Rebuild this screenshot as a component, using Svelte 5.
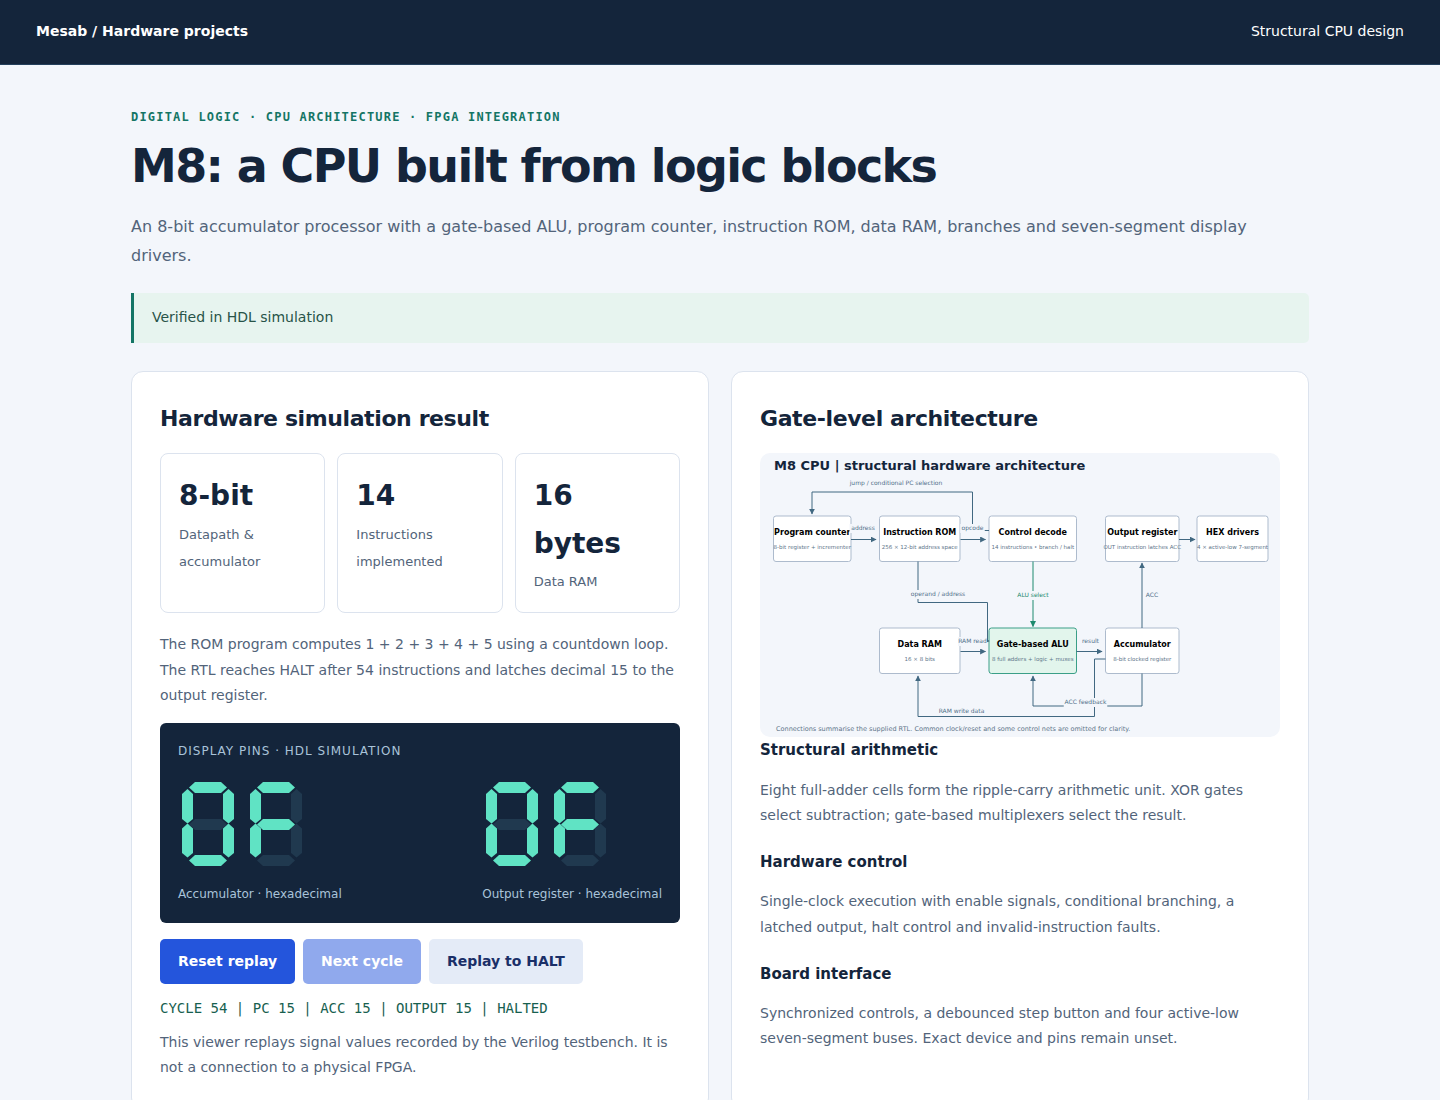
<script>
  const stats = [
    { value: '8-bit', label: 'Datapath & accumulator' },
    { value: '14', label: 'Instructions implemented' },
    { value: '16 bytes', label: 'Data RAM' }
  ];

  const segmentShapes = {
    a: '11,9.5 17,4 43,4 49,9.5 43,15 17,15',
    b: '50.5,11 56,16 56,41 50.5,45.5 45,41 45,16',
    c: '50.5,45.5 56,50.5 56,75 50.5,79.5 45,75 45,50.5',
    d: '11,82.5 17,77 43,77 49,82.5 43,88 17,88',
    e: '9.5,45.5 15,50.5 15,75 9.5,79.5 4,75 4,50.5',
    f: '9.5,11 15,16 15,41 9.5,45.5 4,41 4,16',
    g: '11,46.5 17,41 43,41 49,46.5 43,52 17,52'
  };
  const digitSegments = { '0': 'abcdef', F: 'aefg' };

  const displays = [
    { digits: ['0', 'F'], label: 'Accumulator · hexadecimal' },
    { digits: ['0', 'F'], label: 'Output register · hexadecimal' }
  ];

  const blocks = [
    { x: 27, y: 126, w: 155, name: 'Program counter', note: '8-bit register + incrementer' },
    { x: 239, y: 126, w: 161, name: 'Instruction ROM', note: '256 × 12-bit address space' },
    { x: 458, y: 126, w: 175, name: 'Control decode', note: '14 instructions • branch / halt' },
    { x: 691, y: 126, w: 147, name: 'Output register', note: 'OUT instruction latches ACC' },
    { x: 874, y: 126, w: 142, name: 'HEX drivers', note: '4 × active-low 7-segment' },
    { x: 239, y: 350, w: 161, name: 'Data RAM', note: '16 × 8 bits' },
    { x: 458, y: 350, w: 175, name: 'Gate-based ALU', note: '8 full adders + logic + muxes', active: true },
    { x: 691, y: 350, w: 147, name: 'Accumulator', note: '8-bit clocked register' }
  ];

  const wires = [
    'M182 173H232',
    'M401 173H451',
    'M838 173H870',
    'M458 155H425V78H104V122',
    'M316 217V299H455V376H458',
    'M401 397H451',
    'M633 397H684',
    'M764 350V220',
    'M764 441V506H546V446',
    'M691 412H669V527H316V446'
  ];

  const labels = [
    { x: 272, y: 64, w: 190, text: 'jump / conditional PC selection' },
    { x: 206, y: 154, w: 54, text: 'address' },
    { x: 425, y: 154, w: 49, text: 'opcode' },
    { x: 356, y: 286, w: 114, text: 'operand / address' },
    { x: 546, y: 288, w: 68, text: 'ALU select', active: true },
    { x: 784, y: 288, w: 28, text: 'ACC' },
    { x: 425, y: 380, w: 58, text: 'RAM read' },
    { x: 661, y: 380, w: 42, text: 'result' },
    { x: 651, y: 502, w: 87, text: 'ACC feedback' },
    { x: 403, y: 520, w: 98, text: 'RAM write data' }
  ];

  const topics = [
    { title: 'Structural arithmetic', text: 'Eight full-adder cells form the ripple-carry arithmetic unit. XOR gates select subtraction; gate-based multiplexers select the result.' },
    { title: 'Hardware control', text: 'Single-clock execution with enable signals, conditional branching, a latched output, halt control and invalid-instruction faults.' },
    { title: 'Board interface', text: 'Synchronized controls, a debounced step button and four active-low seven-segment buses. Exact device and pins remain unset.' }
  ];
</script>

<header class="topbar">
  <strong>Mesab / Hardware projects</strong>
  <span>Structural CPU design</span>
</header>

<main>
  <p class="eyebrow">DIGITAL LOGIC · CPU ARCHITECTURE · FPGA INTEGRATION</p>
  <h1>M8: a CPU built from logic blocks</h1>
  <p class="lead">An 8-bit accumulator processor with a gate-based ALU, program counter, instruction ROM, data RAM, branches and seven-segment display drivers.</p>
  <div class="status">Verified in HDL simulation</div>

  <div class="columns">
    <section class="card">
      <h2>Hardware simulation result</h2>
      <div class="stats">
        {#each stats as stat}
          <div class="stat">
            <strong>{stat.value}</strong>
            <span>{stat.label}</span>
          </div>
        {/each}
      </div>
      <p class="summary">The ROM program computes 1 + 2 + 3 + 4 + 5 using a countdown loop. The RTL reaches HALT after 54 instructions and latches decimal 15 to the output register.</p>

      <div class="panel">
        <div class="panel-title">DISPLAY PINS · HDL SIMULATION</div>
        <div class="displays">
          {#each displays as display}
            <figure>
              <div class="digits">
                {#each display.digits as digit}
                  <svg viewBox="0 0 60 92" width="60" height="92" aria-hidden="true">
                    {#each Object.entries(segmentShapes) as [id, points]}
                      <polygon class="segment" class:lit={digitSegments[digit].includes(id)} {points} />
                    {/each}
                  </svg>
                {/each}
              </div>
              <figcaption>{display.label}</figcaption>
            </figure>
          {/each}
        </div>
      </div>

      <div class="actions">
        <button type="button" class="primary">Reset replay</button>
        <button type="button" class="primary" disabled>Next cycle</button>
        <button type="button">Replay to HALT</button>
      </div>
      <p class="trace">CYCLE 54 | PC 15 | ACC 15 | OUTPUT 15 | HALTED</p>
      <p class="remark">This viewer replays signal values recorded by the Verilog testbench. It is not a connection to a physical FPGA.</p>
    </section>

    <section class="card">
      <h2>Gate-level architecture</h2>
      <svg class="diagram" viewBox="0 0 1040 568" role="img" aria-label="M8 CPU structural hardware architecture">
        <defs>
          <marker id="arrow" viewBox="0 0 10 10" refX="9" refY="5" markerWidth="6" markerHeight="6" orient="auto">
            <path d="M0 0L10 5L0 10z" fill="#416881" />
          </marker>
          <marker id="arrow-active" viewBox="0 0 10 10" refX="9" refY="5" markerWidth="6" markerHeight="6" orient="auto">
            <path d="M0 0L10 5L0 10z" fill="#1d8a6e" />
          </marker>
        </defs>
        <text class="diagram-title" x="28" y="34">M8 CPU | structural hardware architecture</text>
        {#each blocks as block}
          <rect class="block" class:active={block.active} x={block.x} y={block.y} width={block.w} height="91" rx="5" />
          <text class="block-name" x={block.x + block.w / 2} y={block.y + 38}>{block.name}</text>
          <text class="block-note" x={block.x + block.w / 2} y={block.y + 66}>{block.note}</text>
        {/each}
        {#each wires as wire}
          <path class="wire" d={wire} marker-end="url(#arrow)" />
        {/each}
        <path class="wire active" d="M546 217V347" marker-end="url(#arrow-active)" />
        {#each labels as label}
          <rect class="label-back" x={label.x - label.w / 2} y={label.y - 12} width={label.w} height="18" />
          <text class="wire-label" class:active={label.active} x={label.x} y={label.y}>{label.text}</text>
        {/each}
        <text class="diagram-note" x="32" y="556">Connections summarise the supplied RTL. Common clock/reset and some control nets are omitted for clarity.</text>
      </svg>
      {#each topics as topic}
        <h3>{topic.title}</h3>
        <p class="topic">{topic.text}</p>
      {/each}
    </section>
  </div>
</main>

<style>
  :global(body) {
    margin: 0;
    background: #f3f6fb;
    color: #14253b;
    font: 16px/1.7 "DejaVu Sans", sans-serif;
  }
  .topbar {
    display: flex;
    justify-content: space-between;
    align-items: center;
    padding: 19px 36px 21px;
    border-bottom: 1px solid #24405c;
    background: #14253b;
    color: #fff;
    font-size: 14px;
    line-height: 24px;
  }
  main {
    box-sizing: border-box;
    max-width: 1250px;
    margin: 0 auto;
    padding: 42px 36px;
  }
  h1, h2, h3, p, figure { margin: 0; }
  p {
    color: #52647a;
    font-size: 14px;
    line-height: 1.8;
  }
  .eyebrow {
    color: #147565;
    font: bold 12px/20px "DejaVu Sans Mono", monospace;
    letter-spacing: 0.1em;
  }
  h1 {
    margin-top: 11px;
    font-size: 46px;
    line-height: 56px;
    letter-spacing: -0.035em;
  }
  .lead {
    margin-top: 18px;
    font-size: 16px;
    line-height: 29px;
  }
  .status {
    margin-top: 23px;
    padding: 12px 18px 14px;
    border-left: 3px solid #147565;
    border-radius: 0 5px 5px 0;
    background: #e7f4ef;
    color: #285348;
    font-size: 14px;
    line-height: 24px;
  }
  .columns {
    display: grid;
    grid-template-columns: repeat(2, minmax(0, 1fr));
    gap: 22px;
    margin-top: 28px;
  }
  .card {
    padding: 28px;
    border: 1px solid #dce3ee;
    border-radius: 12px;
    background: #fff;
  }
  h2 {
    margin-bottom: 15px;
    font-size: 22px;
    line-height: 38px;
    letter-spacing: -0.018em;
  }
  .stats {
    display: grid;
    grid-template-columns: repeat(3, minmax(0, 1fr));
    gap: 12px;
  }
  .stat {
    padding: 18px;
    border: 1px solid #dce3ee;
    border-radius: 8px;
  }
  .stat strong {
    display: block;
    font-size: 28px;
  }
  .stat span {
    color: #52647a;
    font-size: 13px;
  }
  .summary,
  .remark { line-height: 1.82; }
  .summary { margin: 19px 0 14px; }
  .panel {
    padding: 18px;
    border-radius: 6px;
    background: #14253b;
    color: #a9c3d9;
    font-size: 12px;
    line-height: 1.7;
  }
  .panel-title { letter-spacing: 1px; }
  .displays {
    display: flex;
    justify-content: space-between;
    gap: 20px;
    margin-top: 17px;
  }
  .digits {
    display: flex;
    gap: 8px;
    margin-bottom: 14px;
  }
  .segment { fill: #20394f; }
  .segment.lit { fill: #60e3c4; }
  .actions {
    display: flex;
    flex-wrap: wrap;
    gap: 8px;
    margin-top: 16px;
  }
  button {
    padding: 10px 18px;
    border: 0;
    border-radius: 5px;
    background: #e4ebf7;
    color: #1a2f68;
    font: bold 14px/25px "DejaVu Sans", sans-serif;
  }
  button.primary {
    background: #2455dc;
    color: #fff;
  }
  button:disabled { opacity: 0.5; }
  .trace {
    margin: 12px 0 10px;
    color: #17604f;
    font: 14px/24px "DejaVu Sans Mono", monospace;
  }
  .diagram {
    display: block;
    width: 100%;
    margin-bottom: 1px;
    border-radius: 10px;
    background: #f3f6fb;
  }
  .diagram text { text-anchor: middle; }
  .diagram .diagram-title,
  .diagram .diagram-note { text-anchor: start; }
  .diagram-title {
    fill: #14253b;
    font-size: 26px;
    font-weight: bold;
  }
  .diagram-note { fill: #60758a; font-size: 13px; }
  .block { fill: #fff; stroke: #adbbcd; stroke-width: 2; }
  .block.active { fill: #e2f5ec; stroke: #3a9f87; }
  .block-name { fill: #000; font-size: 16px; font-weight: bold; }
  .block-note { fill: #60758a; font-size: 11px; }
  .wire { fill: none; stroke: #416881; stroke-width: 2; }
  .wire.active { stroke: #1d8a6e; }
  .label-back { fill: #f3f6fb; }
  .wire-label { fill: #52708a; font-size: 12px; }
  .wire-label.active { fill: #1d8a6e; }
  h3 {
    font-size: 15px;
    line-height: 1.7;
  }
  .topic { margin: 14px 0 22px; }
</style>
